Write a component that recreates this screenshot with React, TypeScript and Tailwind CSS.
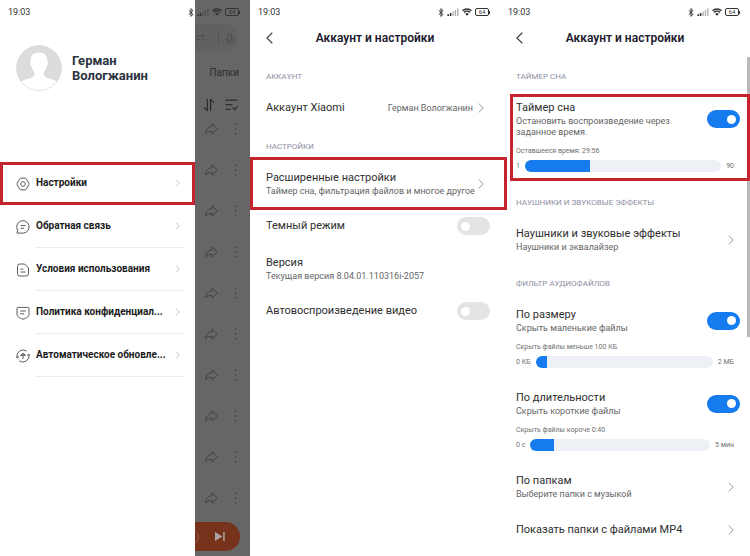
import clsx from "clsx";
import { useState } from "react";

const Chevron = ({ className }: { className?: string }) => (
  <svg viewBox="0 0 6 10" fill="none" stroke="currentColor" className={className}>
    <path d="M0.8 0.6 5.2 5 0.8 9.4" />
  </svg>
);

const StatusBar = () => (
  <div className="relative z-10 flex h-6 items-center justify-between pr-[10px] pl-2 text-[#333]">
    <span className="text-[9px] leading-3">19:03</span>
    <div className="flex items-center gap-[3px]">
      <svg viewBox="0 0 6 9" className="h-[9px] w-[6px]" fill="none" stroke="currentColor">
        <path d="M0.8 2.4 5 6.4 3 8.4V0.6L5 2.6 0.8 6.6" />
      </svg>
      <svg viewBox="0 0 12 8" className="h-2 w-3" fill="currentColor">
        <path d="M0.4 6.2h1.6V8H0.4zM2.8 5h1.6v3H2.8z" />
        <path d="M5.4 3.6h1.4V8H5.4zM7.8 2h1.3v6H7.8zM10.2 0.4h1.3V8h-1.3z" opacity="0.4" />
      </svg>
      <svg viewBox="0 0 10 8" className="h-2 w-[10px]" fill="none" stroke="currentColor" strokeWidth="1.4">
        <path d="M0.5 2.7a6.6 6.6 0 0 1 9 0M2 4.5a4.4 4.4 0 0 1 6 0" />
        <path d="M3.2 5.9a2.6 2.6 0 0 1 3.6 0L5 7.8z" fill="currentColor" stroke="none" />
      </svg>
      <div className="flex items-center">
        <span className="flex h-2 w-[14px] items-center justify-center rounded-[2px] border border-current text-[6px] leading-none">
          64
        </span>
        <span className="h-[3px] w-px bg-current" />
      </div>
    </div>
  </div>
);

const Header = () => (
  <header className="relative flex h-7 items-center justify-center">
    <button type="button" aria-label="Назад" className="absolute left-4 text-[#444]">
      <svg viewBox="0 0 7 12" className="h-3 w-[7px]" fill="none" stroke="currentColor" strokeWidth="1.2">
        <path d="M6.3 0.7 0.9 6l5.4 5.3" />
      </svg>
    </button>
    <h1 className="text-[12px] leading-4 font-semibold text-[#1d1a2e]">Аккаунт и настройки</h1>
  </header>
);

const GroupTitle = ({ children }: { children: React.ReactNode }) => (
  <h2 className="pt-4 pb-1 pl-4 text-[8px] leading-3 text-[#8d90a3] uppercase">{children}</h2>
);

interface SwitchProps {
  label: string;
  defaultChecked?: boolean;
}

const Switch = ({ label, defaultChecked }: SwitchProps) => (
  <input
    type="checkbox"
    role="switch"
    aria-label={label}
    defaultChecked={defaultChecked}
    className="-my-px flex h-[18px] w-[33px] shrink-0 appearance-none items-center rounded-full bg-[#e4e4e4] px-1 before:size-[9px] before:rounded-full before:bg-white checked:justify-end checked:bg-[#157bef]"
  />
);

interface RangeProps {
  caption: string;
  min: string;
  max: string;
  limit: number;
  defaultValue: number;
}

const Range = ({ caption, min, max, limit, defaultValue }: RangeProps) => {
  const [value, setValue] = useState(defaultValue);
  const percent = (value / limit) * 100;

  return (
    <label className="mt-[7px] block pr-[6px] text-[7px] leading-3 text-[#707070]">
      {caption}
      <span className="mt-[3px] flex items-center gap-[5px]">
        <span>{min}</span>
        <input
          type="range"
          min={0}
          max={limit}
          value={value}
          onChange={(e) => setValue(Number(e.target.value))}
          className="h-3 min-w-0 flex-1 appearance-none rounded-full [&::-webkit-slider-thumb]:appearance-none"
          style={{
            background: `linear-gradient(to right, #157bef ${percent}%, #edf0f5 ${percent}%)`,
          }}
        />
        <span>{max}</span>
      </span>
    </label>
  );
};

interface RowProps {
  title: string;
  text?: string;
  aside?: React.ReactNode;
  children?: React.ReactNode;
  className?: string;
}

const Row = ({ title, text, aside, children, className }: RowProps) => (
  <div className={clsx("relative pt-[13px] pr-[10px] pl-4", className)}>
    <div className="flex items-center justify-between">
      <div className="min-w-0">
        <p className="text-[11px] leading-4 whitespace-nowrap text-[#2e2e2e]">{title}</p>
        {text && <p className="text-[9px] leading-[11px] whitespace-pre-line text-[#666]">{text}</p>}
      </div>
      {aside}
    </div>
    {children}
  </div>
);

const Arrow = () => <Chevron className="mr-[6px] h-[10px] w-[6px] shrink-0 text-[#999]" />;

const menu = [
  {
    title: "Настройки",
    icon: (
      <>
        <path d="M4.6 1.2h4.8a1 1 0 0 1 .8.5l2.700 4.700a1 1 0 0 1 0 1.200l-2.700 4.700a1 1 0 0 1-.8.5H4.600a1 1 0 0 1-.8-.5L1.100 7.600a1 1 0 0 1 0-1.200l2.700-4.700a1 1 0 0 1 .8-.5z" />
        <circle cx="7" cy="7" r="2.3" />
      </>
    ),
  },
  {
    title: "Обратная связь",
    icon: <path d="M1 13.1 1.700 10.300A6.200 6.200 0 1 1 7.200 13.100zM4.600 5.600h5M4.600 8.300h3.400" />,
  },
  {
    title: "Условия использования",
    icon: <path d="M1.500 3.400A2.400 2.400 0 0 1 3.900 1h4.600l4 4v5.600a2.400 2.400 0 0 1-2.400 2.400H3.900a2.400 2.400 0 0 1-2.400-2.400zM4.500 6.200h2.800M4.500 9h5" />,
  },
  {
    title: "Политика конфиденциал...",
    icon: <path d="M1 2.600A1.200 1.200 0 0 1 2.200 1.400h9.600A1.200 1.200 0 0 1 13 2.600v5.200c0 3.200-2.600 4.200-6 5.400C3.600 12 1 11 1 7.800zM4.200 5h5.600M4.200 7.800h4" />,
  },
  {
    title: "Автоматическое обновле...",
    icon: <path d="M1.200 8.800A6.100 6.100 0 0 1 10.600 2.100M12.800 5.200A6.100 6.100 0 0 1 3.400 11.900M7 10.200V4.600M4.400 6.400h5.200L7 4.200zM0 7.200l1.300 1.700 1.500-1.100M14 6.800 12.700 5.100 11.200 6.200" />,
  },
];

const Highlight = ({ className }: { className: string }) => (
  <span className={clsx("pointer-events-none absolute z-10 border-[3px] border-[#c3242e]", className)} />
);

// Track list that stays dimmed under the drawer
const Player = () => (
  <div className="absolute inset-0 flex flex-col items-end overflow-hidden bg-[#666] pt-6 text-[#2c2c2c]">
    <div className="mr-3 flex h-7 w-48 items-center justify-end gap-[6px] rounded-full bg-[#616161] pr-1 text-[9px] text-[#484848]">
      <span>ст...</span>
      <span className="h-[10px] w-px bg-[#505050]" />
      <svg viewBox="0 0 9 11" className="h-[11px] w-[9px]" fill="none" stroke="currentColor" strokeWidth="0.9">
        <rect x="2.6" y="0.5" width="3.8" height="7" rx="1.9" />
        <path d="M0.6 4.6v1a3.9 3.9 0 0 0 7.8 0v-1M4.5 9.5V11" />
      </svg>
    </div>
    <span className="mt-[15px] mr-[11px] text-[10px] leading-3">Папки</span>
    <div className="mt-[19px] mr-3 flex items-center gap-[10px]">
      <svg viewBox="0 0 12 14" className="h-[14px] w-3" fill="none" stroke="currentColor" strokeWidth="1.2">
        <path d="M4.400 1v11.400L1 9.400M7.600 13V1.600L11 4.600" />
      </svg>
      <svg viewBox="0 0 13 12" className="h-3 w-[13px]" fill="none" stroke="currentColor" strokeWidth="1.2">
        <path d="M0.5 1.2h12M0.5 5.7h7M0.5 10.4h5M7.6 8.4l2 2.2 3-3.4" />
      </svg>
    </div>
    <ul className="mt-[-4px] mr-[13px]">
      {Array.from({ length: 10 }, (_, i) => (
        <li key={i} className="flex h-[41px] items-center gap-4">
          <svg viewBox="0 0 13 12" className="h-3 w-[13px]" fill="none" stroke="#414141" strokeLinejoin="round">
            <path d="M7 0.8 12.4 6 7 11.200V8.400C4.400 8.200 2.400 8.800 0.6 10.800 0.8 6.600 3.200 4 7 3.600z" />
          </svg>
          <svg viewBox="0 0 3 12" className="h-3 w-[3px]" fill="#3a3a3a">
            <circle cx="1.5" cy="1.3" r="0.8" />
            <circle cx="1.5" cy="6" r="0.8" />
            <circle cx="1.5" cy="10.7" r="0.8" />
          </svg>
        </li>
      ))}
    </ul>
    <div className="mt-auto mr-[10px] mb-[5px] flex h-[29px] w-56 shrink-0 items-center justify-end gap-4 rounded-full bg-[#76321b] pr-[15px] text-[#aba39f]">
      <span className="size-[14px] rounded-full border border-[#92604f]" />
      <svg viewBox="0 0 10 9" className="h-[9px] w-[10px]" fill="currentColor">
        <path d="M0 0 7.4 4.5 0 9zM8.2 0h1.5v9H8.2z" />
      </svg>
    </div>
  </div>
);

const DrawerScreen = () => (
  <section className="relative">
    <Player />
    <nav className="absolute inset-y-0 left-0 w-[78%] bg-white pt-[45px]">
      <div className="flex items-center gap-[10px] pl-4">
        <svg viewBox="0 0 46 46" className="size-[46px] shrink-0">
          <circle cx="23" cy="23" r="22.5" fill="#dcdcdc" />
          <path
            d="M23 7.600c6 0 8.800 3.800 8.400 9 1.200.4 1 3-.6 4.200-.6 3-1.600 4.600-3 6v4c1.400 2.400 9.800 3.200 13.200 6.200A22.500 22.500 0 0 1 5 37c3.400-3 11.800-3.800 13.200-6.200v-4c-1.400-1.400-2.400-3-3-6-1.600-1.200-1.800-3.800-.6-4.200C14.200 11.400 17 7.600 23 7.600z"
            fill="#fff"
          />
          <circle cx="23" cy="23" r="22.5" fill="none" stroke="#d8d8d8" strokeWidth="0.7" />
        </svg>
        <p className="text-[13px] leading-[15px] font-bold text-[#2b3440]">
          Герман
          <br />
          Вологжанин
        </p>
      </div>
      <ul className="mt-[71px]">
        {menu.map(({ title, icon }, i) => (
          <li key={title} className="relative">
            <a href="#" className="flex h-[43px] items-stretch gap-[6px] pr-[11px] pl-4">
              <svg viewBox="0 0 14 14" className="size-[14px] shrink-0 self-center" fill="none" stroke="#5c5c5c">
                {icon}
              </svg>
              <span
                className={clsx(
                  "flex min-w-0 flex-1 items-center justify-between border-b pr-1",
                  i ? "border-[#ececec]" : "border-transparent"
                )}
              >
                <span className="text-[10px] leading-4 font-bold whitespace-nowrap text-[#1c1c1c]">{title}</span>
                <Chevron className="h-2 w-[5px] shrink-0 text-[#bbb]" />
              </span>
            </a>
            {i === 0 && <Highlight className="inset-0" />}
          </li>
        ))}
      </ul>
    </nav>
    <StatusBar />
  </section>
);

const AccountScreen = () => (
  <section>
    <StatusBar />
    <Header />
    <div className="pt-[3px]">
      <GroupTitle>Аккаунт</GroupTitle>
      <Row
        className="pb-[9px]"
        title="Аккаунт Xiaomi"
        aside={
          <span className="flex items-center gap-[5px] text-[9px] leading-3 text-[#666]">
            Герман Вологжанин
            <Arrow />
          </span>
        }
      />
      <GroupTitle>Настройки</GroupTitle>
      <Row
        className="pb-2"
        title="Расширенные настройки"
        text="Таймер сна, фильтрация файлов и многое другое"
        aside={<Arrow />}
      >
        <Highlight className="top-0 right-[-7px] bottom-[-5px] left-0" />
      </Row>
      <Row className="pb-2" title="Темный режим" aside={<Switch label="Темный режим" />} />
      <Row className="pb-2" title="Версия" text="Текущая версия 8.04.01.110316i-2057" />
      <Row className="pb-2" title="Автовоспроизведение видео" aside={<Switch label="Автовоспроизведение видео" />} />
    </div>
  </section>
);

const AdvancedScreen = () => (
  <section className="relative">
    <StatusBar />
    <Header />
    <span className="absolute top-[57px] right-0 h-[280px] w-[3px] bg-[#b9b9b9]" />
    <div className="pt-[3px]">
      <GroupTitle>Таймер сна</GroupTitle>
      <Row
        className="pb-[9px]"
        title="Таймер сна"
        text={"Остановить воспроизведение через\nзаданное время."}
        aside={<Switch label="Таймер сна" defaultChecked />}
      >
        <Range caption="Оставшееся время: 29:56" min="1" max="90" limit={90} defaultValue={30} />
        <Highlight className="top-[7px] right-0 bottom-0 left-[10px]" />
      </Row>
      <GroupTitle>Наушники и звуковые эффекты</GroupTitle>
      <Row
        className="pb-[9px]"
        title="Наушники и звуковые эффекты"
        text="Наушники и эквалайзер"
        aside={<Arrow />}
      />
      <GroupTitle>Фильтр аудиофайлов</GroupTitle>
      <Row
        className="pb-[9px]"
        title="По размеру"
        text="Скрыть маленькие файлы"
        aside={<Switch label="По размеру" defaultChecked />}
      >
        <Range caption="Скрыть файлы меньше 100 КБ" min="0 КБ" max="2 МБ" limit={2000} defaultValue={125} />
      </Row>
      <Row
        className="pb-[9px]"
        title="По длительности"
        text="Скрыть короткие файлы"
        aside={<Switch label="По длительности" defaultChecked />}
      >
        <Range caption="Скрыть файлы короче 0:40" min="0 с" max="5 мин" limit={300} defaultValue={40} />
      </Row>
      <Row className="pb-[9px]" title="По папкам" text="Выберите папки с музыкой" aside={<Arrow />} />
      <Row className="pb-[9px]" title="Показать папки с файлами MP4" aside={<Arrow />} />
    </div>
  </section>
);

export default function App() {
  return (
    <main className="grid min-h-screen grid-cols-3 bg-white font-[Roboto,sans-serif]">
      <DrawerScreen />
      <AccountScreen />
      <AdvancedScreen />
    </main>
  );
}
